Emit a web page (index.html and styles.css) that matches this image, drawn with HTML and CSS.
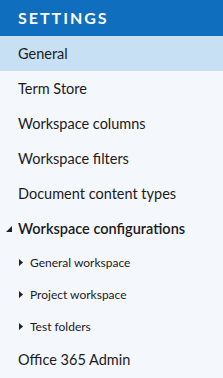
FILE: index.html
```html
<!DOCTYPE html>
<html lang="en">
<head>
    <meta charset="UTF-8">
    <meta name="viewport" content="width=device-width, initial-scale=1.0">
    <title>Settings</title>
    <link rel="stylesheet" href="styles.css">
</head>
<body>
    <div class="settings_header">SETTINGS</div>
    <ul class="settings_nav">
        <li class="nav_item selected">General</li>
        <li class="nav_item">Term Store</li>
        <li class="nav_item">Workspace columns</li>
        <li class="nav_item">Workspace filters</li>
        <li class="nav_item">Document content types</li>
        <li class="nav_item nav_group">
            <svg class="arrow_open" width="6" height="6" viewBox="0 0 6 6"><polygon points="6,0 6,6 0,6" fill="#222"/></svg>
            Workspace configurations
        </li>
        <li class="nav_item nav_sub">
            <svg class="arrow_closed" width="4" height="7" viewBox="0 0 4 7"><polygon points="0,0 4,3.5 0,7" fill="#222"/></svg>
            General workspace
        </li>
        <li class="nav_item nav_sub">
            <svg class="arrow_closed" width="4" height="7" viewBox="0 0 4 7"><polygon points="0,0 4,3.5 0,7" fill="#222"/></svg>
            Project workspace
        </li>
        <li class="nav_item nav_sub">
            <svg class="arrow_closed" width="4" height="7" viewBox="0 0 4 7"><polygon points="0,0 4,3.5 0,7" fill="#222"/></svg>
            Test folders
        </li>
        <li class="nav_item">Office 365 Admin</li>
    </ul>
</body>
</html>
```

FILE: styles.css
```css
body {
    margin: 0;
    padding: 0;
    font-family: Lato, "Open Sans", sans-serif;
    background-color: #f4f7fb;
    color: #1b1b1b;
}

.settings_header {
    height: 36px;
    box-sizing: border-box;
    padding: 9px 0 0 18px;
    background-color: #106ebe;
    color: #fff;
    font-weight: 700;
    font-size: 16px;
    letter-spacing: 2px;
    line-height: 18px;
}

.settings_nav {
    list-style-type: none;
    margin: 0;
    padding: 0;
}

.nav_item {
    display: flex;
    align-items: center;
    height: 35px;
    padding-left: 18px;
    font-size: 14.5px;
    position: relative;
}

.selected {
    background-color: #c7e0f4;
}

.nav_group {
    font-weight: 600;
}

.arrow_open {
    position: absolute;
    left: 6px;
    top: 15px;
}

.nav_sub {
    height: 32px;
    padding-left: 30px;
    font-size: 12px;
}

.arrow_closed {
    position: absolute;
    left: 19px;
    top: 13px;
}
```
